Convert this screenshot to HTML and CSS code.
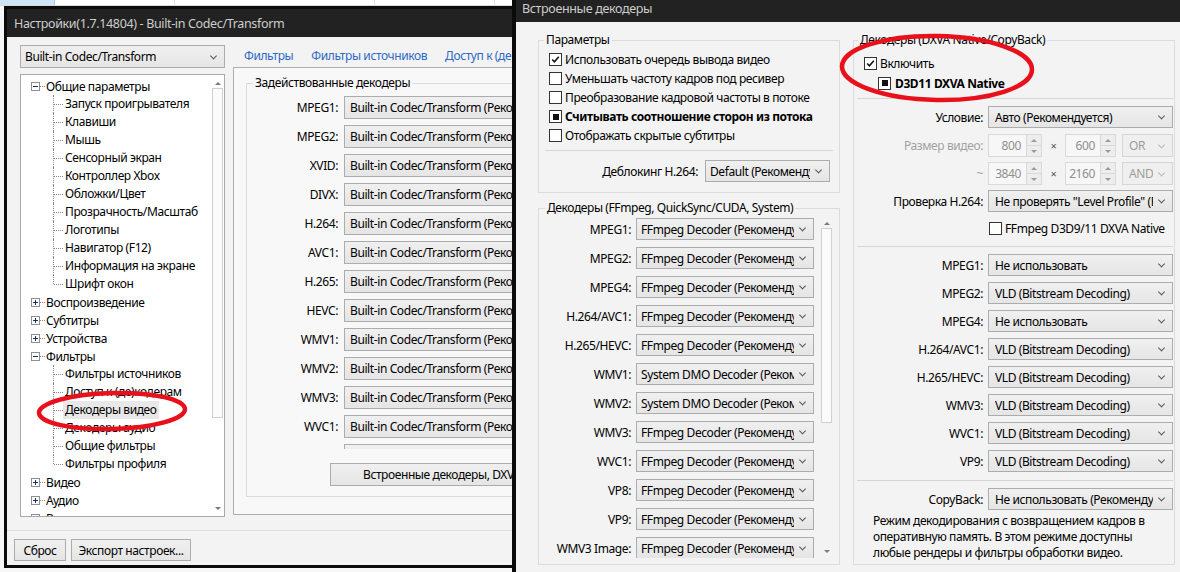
FILE: index.html
```html
<!DOCTYPE html>
<html lang="ru">
<head>
<meta charset="utf-8">
<title>Настройки</title>
<link rel="stylesheet" href="styles.css">
</head>
<body>
<div class="desktop">
  <div class="bg-app">
    <div class="bg-top">
      <span class="bg-tab"></span>
      <span class="bg-cell"></span>
      <span class="bg-cell wide"></span>
      <span class="bg-cell"></span>
    </div>
  </div>

  <section class="win win-main">
    <header class="titlebar">Настройки(1.7.14804) - Built-in Codec/Transform</header>
    <div class="main-body">
      <div class="main-top">
        <div class="nav-col">
          <div class="combo combo-nav"><span class="val">Built-in Codec/Transform</span></div>
          <div class="tree">
            <div class="tree-list">
              <div class="node"><span class="exp minus"></span><span class="dots"></span><span>Общие параметры</span></div>
              <div class="kids">
                <div class="kid"><span>Запуск проигрывателя</span></div>
                <div class="kid"><span>Клавиши</span></div>
                <div class="kid"><span>Мышь</span></div>
                <div class="kid"><span>Сенсорный экран</span></div>
                <div class="kid"><span>Контроллер Xbox</span></div>
                <div class="kid"><span>Обложки/Цвет</span></div>
                <div class="kid"><span>Прозрачность/Масштаб</span></div>
                <div class="kid"><span>Логотипы</span></div>
                <div class="kid"><span>Навигатор (F12)</span></div>
                <div class="kid"><span>Информация на экране</span></div>
                <div class="kid"><span>Шрифт окон</span></div>
              </div>
              <div class="node"><span class="exp plus"></span><span class="dots"></span><span>Воспроизведение</span></div>
              <div class="node"><span class="exp plus"></span><span class="dots"></span><span>Субтитры</span></div>
              <div class="node"><span class="exp plus"></span><span class="dots"></span><span>Устройства</span></div>
              <div class="node"><span class="exp minus"></span><span class="dots"></span><span>Фильтры</span></div>
              <div class="kids">
                <div class="kid"><span>Фильтры источников</span></div>
                <div class="kid"><span>Доступ к (де)кодерам</span></div>
                <div class="kid"><span class="sel">Декодеры видео</span></div>
                <div class="kid"><span>Декодеры аудио</span></div>
                <div class="kid"><span>Общие фильтры</span></div>
                <div class="kid"><span>Фильтры профиля</span></div>
              </div>
              <div class="node"><span class="exp plus"></span><span class="dots"></span><span>Видео</span></div>
              <div class="node"><span class="exp plus"></span><span class="dots"></span><span>Аудио</span></div>
              <div class="node"><span class="exp plus"></span><span class="dots"></span><span>Вывод</span></div>
            </div>
            <div class="vscroll vscroll-tree">
              <span class="arr up"></span>
              <span class="thumb"></span>
              <span class="track"></span>
              <span class="arr down"></span>
            </div>
          </div>
        </div>
        <div class="page-col">
          <nav class="links">
            <a>Фильтры</a>
            <a>Фильтры источников</a>
            <a>Доступ к (де)кодерам</a>
          </nav>
          <div class="pane">
            <fieldset class="group group-used">
              <legend>Задействованные декодеры</legend>
              <div class="rows-clip">
                <div class="rows rows-used">
                  <label>MPEG1:</label><div class="combo combo-tall"><span class="val">Built-in Codec/Transform (Рекомендуется)</span></div>
                  <label>MPEG2:</label><div class="combo combo-tall"><span class="val">Built-in Codec/Transform (Рекомендуется)</span></div>
                  <label>XVID:</label><div class="combo combo-tall"><span class="val">Built-in Codec/Transform (Рекомендуется)</span></div>
                  <label>DIVX:</label><div class="combo combo-tall"><span class="val">Built-in Codec/Transform (Рекомендуется)</span></div>
                  <label>H.264:</label><div class="combo combo-tall"><span class="val">Built-in Codec/Transform (Рекомендуется)</span></div>
                  <label>AVC1:</label><div class="combo combo-tall"><span class="val">Built-in Codec/Transform (Рекомендуется)</span></div>
                  <label>H.265:</label><div class="combo combo-tall"><span class="val">Built-in Codec/Transform (Рекомендуется)</span></div>
                  <label>HEVC:</label><div class="combo combo-tall"><span class="val">Built-in Codec/Transform (Рекомендуется)</span></div>
                  <label>WMV1:</label><div class="combo combo-tall"><span class="val">Built-in Codec/Transform (Рекомендуется)</span></div>
                  <label>WMV2:</label><div class="combo combo-tall"><span class="val">Built-in Codec/Transform (Рекомендуется)</span></div>
                  <label>WMV3:</label><div class="combo combo-tall"><span class="val">Built-in Codec/Transform (Рекомендуется)</span></div>
                  <label>WVC1:</label><div class="combo combo-tall"><span class="val">Built-in Codec/Transform (Рекомендуется)</span></div>
                  <label>VP8:</label><div class="combo combo-tall"><span class="val">Built-in Codec/Transform (Рекомендуется)</span></div>
                </div>
              </div>
              <div class="btn btn-dxva">Встроенные декодеры, DXVA Native/CopyBack</div>
            </fieldset>
          </div>
        </div>
      </div>
      <footer class="main-foot">
        <div class="btn btn-reset">Сброс</div>
        <div class="btn btn-export">Экспорт настроек...</div>
      </footer>
    </div>
  </section>

  <section class="win win-dec">
    <header class="titlebar">Встроенные декодеры</header>
    <div class="dec-body">
      <div class="dec-left">
        <fieldset class="group group-params">
          <legend>Параметры</legend>
          <div class="chk"><span class="box"><svg viewBox="0 0 13 13"><path d="M2.6 6.6 L5.2 9.2 L10.4 3.2" /></svg></span><span>Использовать очередь вывода видео</span></div>
          <div class="chk"><span class="box"></span><span>Уменьшать частоту кадров под ресивер</span></div>
          <div class="chk"><span class="box"></span><span>Преобразование кадровой частоты в потоке</span></div>
          <div class="chk"><span class="box ind"><i></i></span><b>Считывать соотношение сторон из потока</b></div>
          <div class="chk"><span class="box"></span><span>Отображать скрытые субтитры</span></div>
          <div class="sep sep-params"></div>
          <div class="deblock">
            <label>Деблокинг H.264:</label>
            <div class="combo combo-deblock"><span class="val">Default (Рекомендуется)</span></div>
          </div>
        </fieldset>
        <fieldset class="group group-ff">
          <legend>Декодеры (FFmpeg, QuickSync/CUDA, System)</legend>
          <div class="ff-body">
            <div class="ff-clip">
              <div class="rows rows-ff">
                <label>MPEG1:</label><div class="combo"><span class="val">FFmpeg Decoder (Рекомендуется)</span></div>
                <label>MPEG2:</label><div class="combo"><span class="val">FFmpeg Decoder (Рекомендуется)</span></div>
                <label>MPEG4:</label><div class="combo"><span class="val">FFmpeg Decoder (Рекомендуется)</span></div>
                <label>H.264/AVC1:</label><div class="combo"><span class="val">FFmpeg Decoder (Рекомендуется)</span></div>
                <label>H.265/HEVC:</label><div class="combo"><span class="val">FFmpeg Decoder (Рекомендуется)</span></div>
                <label>WMV1:</label><div class="combo"><span class="val">System DMO Decoder (Рекомендуется)</span></div>
                <label>WMV2:</label><div class="combo"><span class="val">System DMO Decoder (Рекомендуется)</span></div>
                <label>WMV3:</label><div class="combo"><span class="val">FFmpeg Decoder (Рекомендуется)</span></div>
                <label>WVC1:</label><div class="combo"><span class="val">FFmpeg Decoder (Рекомендуется)</span></div>
                <label>VP8:</label><div class="combo"><span class="val">FFmpeg Decoder (Рекомендуется)</span></div>
                <label>VP9:</label><div class="combo"><span class="val">FFmpeg Decoder (Рекомендуется)</span></div>
                <label>WMV3 Image:</label><div class="combo"><span class="val">FFmpeg Decoder (Рекомендуется)</span></div>
              </div>
            </div>
            <div class="vscroll vscroll-ff">
              <span class="arr up"></span>
              <span class="thumb"></span>
              <span class="track"></span>
              <span class="arr down"></span>
            </div>
          </div>
        </fieldset>
      </div>

      <fieldset class="group group-dxva">
        <legend>Декодеры (DXVA Native/CopyBack)</legend>
        <div class="chk chk-enable"><span class="box"><svg viewBox="0 0 13 13"><path d="M2.6 6.6 L5.2 9.2 L10.4 3.2" /></svg></span><span>Включить</span></div>
        <div class="chk chk-native"><span class="box ind"><i></i></span><b>D3D11 DXVA Native</b></div>
        <div class="sep sep-dxva1"></div>

        <div class="frow fr-cond">
          <label>Условие:</label>
          <div class="combo"><span class="val">Авто (Рекомендуется)</span></div>
        </div>
        <div class="frow fr-size">
          <label class="dim">Размер видео:</label>
          <div class="sizes">
            <div class="spin spin-a"><span class="num">800</span><span class="spin-btns"><span class="sb"><i class="tri up"></i></span><span class="sb"><i class="tri down"></i></span></span></div>
            <span class="times">×</span>
            <div class="spin spin-b"><span class="num">600</span><span class="spin-btns"><span class="sb"><i class="tri up"></i></span><span class="sb"><i class="tri down"></i></span></span></div>
            <div class="combo combo-off"><span class="val">OR</span></div>
          </div>
        </div>
        <div class="frow fr-size2">
          <label class="dim">~</label>
          <div class="sizes">
            <div class="spin spin-a"><span class="num">3840</span><span class="spin-btns"><span class="sb"><i class="tri up"></i></span><span class="sb"><i class="tri down"></i></span></span></div>
            <span class="times">×</span>
            <div class="spin spin-b"><span class="num">2160</span><span class="spin-btns"><span class="sb"><i class="tri up"></i></span><span class="sb"><i class="tri down"></i></span></span></div>
            <div class="combo combo-off"><span class="val">AND</span></div>
          </div>
        </div>
        <div class="frow fr-check">
          <label>Проверка H.264:</label>
          <div class="combo"><span class="val">Не проверять "Level Profile" (Рекомендуется)</span></div>
        </div>
        <div class="chk chk-ffd3d"><span class="box"></span><span>FFmpeg D3D9/11 DXVA Native</span></div>
        <div class="sep sep-dxva2"></div>

        <div class="codec-list">
          <div class="frow"><label>MPEG1:</label><div class="combo"><span class="val">Не использовать</span></div></div>
          <div class="frow"><label>MPEG2:</label><div class="combo"><span class="val">VLD (Bitstream Decoding)</span></div></div>
          <div class="frow"><label>MPEG4:</label><div class="combo"><span class="val">Не использовать</span></div></div>
          <div class="frow"><label>H.264/AVC1:</label><div class="combo"><span class="val">VLD (Bitstream Decoding)</span></div></div>
          <div class="frow"><label>H.265/HEVC:</label><div class="combo"><span class="val">VLD (Bitstream Decoding)</span></div></div>
          <div class="frow"><label>WMV3:</label><div class="combo"><span class="val">VLD (Bitstream Decoding)</span></div></div>
          <div class="frow"><label>WVC1:</label><div class="combo"><span class="val">VLD (Bitstream Decoding)</span></div></div>
          <div class="frow"><label>VP9:</label><div class="combo"><span class="val">VLD (Bitstream Decoding)</span></div></div>
        </div>
        <div class="sep sep-dxva3"></div>
        <div class="frow fr-copy">
          <label>CopyBack:</label>
          <div class="combo"><span class="val">Не использовать (Рекомендуется)</span></div>
        </div>
        <p class="desc">Режим декодирования с возвращением кадров в<br>оперативную память. В этом режиме доступны<br>любые рендеры и фильтры обработки видео.</p>
      </fieldset>
    </div>
  </section>

  <svg class="marks" viewBox="0 0 1180 572" width="1180" height="572">
    <ellipse cx="112" cy="411" rx="73" ry="18" transform="rotate(-1.5 112 411)" />
    <ellipse cx="937" cy="68" rx="95" ry="32" transform="rotate(1 937 68)" />
  </svg>
</div>
</body>
</html>
```

FILE: styles.css
```css
* { box-sizing: border-box; }
html, body { margin: 0; padding: 0; }
body {
  font-family: "Noto Sans", "Segoe UI", sans-serif;
  font-size: 12px;
  letter-spacing: -0.4px;
  color: #000;
  background: #ececec;
}

.desktop {
  position: relative;
  width: 1180px;
  height: 572px;
  overflow: hidden;
  background: #e4e4e4;
}

/* background application peeking out */
.bg-app {
  position: absolute;
  left: 0;
  top: 0;
  width: 520px;
  height: 572px;
  background: #f7f7f7;
}
.bg-top {
  display: flex;
  height: 6px;
  background: #fff;
  border-bottom: 1px solid #d8d8d8;
}
.bg-tab { width: 55px; background: #cfe5f6; border-right: 1px solid #9cc6e8; }
.bg-cell { width: 120px; border-right: 1px solid #e2e2e2; }
.bg-cell.wide { width: 200px; }

/* windows */
.win {
  position: absolute;
  display: flex;
  flex-direction: column;
  background: #f0f0f0;
  border: 3px solid #0b0b0b;
  overflow: hidden;
}
.titlebar {
  flex: 0 0 auto;
  display: flex;
  align-items: center;
  background: #222;
  color: #cdcdcd;
  font-size: 12.5px;
  letter-spacing: -0.35px;
  white-space: nowrap;
}

.win-main {
  left: 4px;
  top: 6px;
  width: 511px;
  height: 562px;
}
.win-main .titlebar { height: 28px; padding-left: 7px; }

.main-body {
  flex: 1;
  display: flex;
  flex-direction: column;
  background: #f3f3f3;
}
.main-top {
  display: grid;
  grid-template-columns: 205px 320px;
  column-gap: 8px;
  padding: 8px 0 13px 13px;
}
.nav-col { display: flex; flex-direction: column; gap: 6px; }

/* combo boxes */
.combo {
  position: relative;
  display: flex;
  align-items: center;
  height: 22px;
  padding: 0 19px 0 4px;
  border: 1px solid #acacac;
  background: linear-gradient(#f0f0f0, #e5e5e5);
  white-space: nowrap;
  overflow: hidden;
}
.combo .val { flex: 1; overflow: hidden; }
.combo::after {
  content: "";
  position: absolute;
  right: 8px;
  top: 50%;
  width: 4px;
  height: 4px;
  border-right: 1.6px solid #555;
  border-bottom: 1.6px solid #555;
  transform: translateY(-70%) rotate(45deg);
}
.combo-nav { height: 23px; }
.combo-tall { height: 23px; width: 220px; padding-left: 5px; }
.combo-off {
  background: #efefef;
  border-color: #d5d5d5;
  color: #9c9c9c;
  padding-left: 7px;
}
.combo-off::after { border-color: #b8b8b8; }

/* tree */
.tree {
  display: flex;
  height: 443px;
  border: 1px solid #a9a9a9;
  background: #fff;
  overflow: hidden;
}
.tree-list {
  flex: 1;
  padding-top: 2px;
  overflow: hidden;
}
.node {
  display: flex;
  align-items: center;
  height: 18px;
  padding-left: 10px;
  white-space: nowrap;
}
.exp {
  position: relative;
  flex: 0 0 9px;
  width: 9px;
  height: 9px;
  border: 1px solid #8e8f8f;
  background: #fff;
}
.exp::before {
  content: "";
  position: absolute;
  left: 1px;
  top: 3px;
  width: 5px;
  height: 1px;
  background: #1d2f6b;
}
.exp.plus::after {
  content: "";
  position: absolute;
  left: 3px;
  top: 1px;
  width: 1px;
  height: 5px;
  background: #1d2f6b;
}
.dots {
  width: 5px;
  margin-right: 1px;
  border-top: 1px dotted #8a8a8a;
}
.kid {
  position: relative;
  height: 18px;
  line-height: 18px;
  padding-left: 44px;
  white-space: nowrap;
}
.kid::before {
  content: "";
  position: absolute;
  left: 32px;
  top: 0;
  height: 100%;
  border-left: 1px dotted #8a8a8a;
}
.kid:last-child::before { height: 9px; }
.kid::after {
  content: "";
  position: absolute;
  left: 33px;
  top: 9px;
  width: 9px;
  border-top: 1px dotted #8a8a8a;
}
.kid .sel {
  display: inline-block;
  margin-left: -2px;
  padding: 0 2px;
  background: #e8e8e8;
}

/* scroll bars */
.vscroll {
  display: flex;
  flex-direction: column;
  align-items: center;
}
.vscroll-tree { flex: 0 0 13px; width: 13px; padding: 3px 0 3px; }
.vscroll .arr {
  flex: 0 0 10px;
  display: flex;
  align-items: center;
  justify-content: center;
}
.vscroll .arr::before {
  content: "";
  width: 0;
  height: 0;
  border-left: 3px solid transparent;
  border-right: 3px solid transparent;
}
.vscroll .arr.up::before { border-bottom: 3px solid #7a7a7a; }
.vscroll .arr.down::before { border-top: 3px solid #7a7a7a; }
.vscroll .thumb {
  width: 11px;
  border: 1px solid #d0d0d0;
  background: #fbfbfb;
}
.vscroll-tree .thumb { height: 330px; }
.vscroll .track { flex: 1; }

/* right column of main window */
.page-col { display: flex; flex-direction: column; }
.links {
  display: flex;
  gap: 18px;
  height: 22px;
  align-items: center;
  padding-left: 11px;
  padding-bottom: 1px;
  white-space: nowrap;
}
.links a { color: #2d69c6; }
.pane {
  height: 448px;
  border: 1px solid #adadad;
  background: #f8f8f8;
  padding: 7px 0 0 12px;
}

.group {
  margin: 0;
  padding: 0;
  border: 1px solid #dcdcdc;
  min-width: 0;
}
.group legend {
  margin-left: 5px;
  padding: 0 2px;
  line-height: 16px;
}
.group-used {
  width: 320px;
  padding: 3px 0 10px 0;
}
.group-used legend { margin-left: 6px; }
.rows-clip {
  height: 355px;
  overflow: hidden;
  padding-top: 2px;
}
.rows {
  display: grid;
  align-items: center;
}
.rows label { text-align: right; white-space: nowrap; }
.rows-used {
  grid-template-columns: 91px 220px;
  column-gap: 6px;
  row-gap: 6px;
}
.btn {
  display: flex;
  align-items: center;
  justify-content: center;
  height: 22px;
  border: 1px solid #acacac;
  background: linear-gradient(#f0f0f0, #e5e5e5);
  white-space: nowrap;
}
.btn-dxva {
  width: 240px;
  height: 23px;
  margin: 14px 0 0 83px;
  justify-content: flex-start;
  padding-left: 32px;
  overflow: hidden;
}

.main-foot {
  display: flex;
  gap: 5px;
  padding: 8px 0 0 7px;
  border-top: 1px solid #dedede;
}
.btn-reset { width: 52px; }
.btn-export { width: 120px; }

/* second window */
.win-dec {
  left: 512px;
  top: -8px;
  width: 700px;
  height: 600px;
  border-width: 4px;
}
.win-dec .titlebar { height: 26px; padding: 0 0 2px 6px; }
.dec-body {
  flex: 1;
  display: grid;
  grid-template-columns: 302px 322px;
  column-gap: 13px;
  align-items: start;
  padding: 10px 0 0 22px;
  background: #f3f3f3;
}
.dec-left { display: flex; flex-direction: column; gap: 7px; }

.chk {
  display: flex;
  align-items: center;
  height: 19px;
  padding-left: 10px;
  white-space: nowrap;
}
.box {
  flex: 0 0 13px;
  width: 13px;
  height: 13px;
  margin-right: 3px;
  border: 1px solid #333;
  background: #fff;
  display: flex;
  align-items: center;
  justify-content: center;
}
.box svg { width: 13px; height: 13px; fill: none; stroke: #111; stroke-width: 1.8; }
.box.ind i { width: 6px; height: 6px; background: #111; }

.group-params { padding: 2px 0 10px 0; }
.sep {
  border-top: 1px solid #d6d6d6;
}
.sep-params { margin: 5px 6px 0 6px; }
.deblock {
  display: flex;
  align-items: center;
  justify-content: flex-end;
  gap: 7px;
  margin-top: 9px;
  padding-right: 9px;
}
.combo-deblock { width: 125px; }

.group-ff { padding: 0 0 6px 0; }
.group-ff legend { margin-left: 6px; }
.ff-body { display: flex; height: 342px; }
.ff-clip { flex: 0 0 275px; overflow: hidden; padding-top: 2px; }
.rows-ff {
  grid-template-columns: 92px 178px;
  column-gap: 5px;
  row-gap: 7px;
}
.vscroll-ff { flex: 0 0 11px; width: 11px; margin-left: 7px; padding: 2px 0 2px; }
.vscroll-ff .arr { flex-basis: 10px; }
.vscroll-ff .thumb { width: 11px; height: 195px; }

/* DXVA group */
.group-dxva { padding: 5px 0 3px 0; }
.group-dxva legend { margin-left: 4px; }
.chk-enable { height: 20px; }
.chk-native { height: 20px; padding-left: 24px; }
.chk-native .box { margin-right: 4px; }
.sep-dxva1 { margin: 5px 1px 0 3px; }

.frow {
  display: flex;
  align-items: center;
  gap: 5px;
}
.frow > label {
  flex: 0 0 129px;
  text-align: right;
  white-space: nowrap;
}
.frow > .combo, .frow > .sizes { flex: 0 0 185px; width: 185px; }
.frow .combo { height: 22px; padding-left: 6px; }
.dim { color: #a2a2a2; }

.fr-cond { margin-top: 7px; }
.fr-size { margin-top: 6px; }
.fr-size2 { margin-top: 5px; }
.fr-check { margin-top: 5px; }
.sizes {
  display: flex;
  align-items: center;
  height: 23px;
}
.spin {
  display: flex;
  height: 23px;
  border: 1px solid #d9d9d9;
  background: #f7f7f7;
  color: #8f8f8f;
}
.spin-a { width: 54px; }
.spin-b { width: 51px; }
.spin .num {
  flex: 1;
  display: flex;
  align-items: center;
  justify-content: flex-end;
  padding-right: 5px;
}
.spin-btns {
  flex: 0 0 15px;
  display: flex;
  flex-direction: column;
  border-left: 1px solid #d9d9d9;
}
.sb {
  flex: 1;
  display: flex;
  align-items: center;
  justify-content: center;
  background: #ededed;
}
.sb + .sb { border-top: 1px solid #d9d9d9; }
.tri {
  width: 0;
  height: 0;
  border-left: 3px solid transparent;
  border-right: 3px solid transparent;
}
.tri.up { border-bottom: 3px solid #9a9a9a; }
.tri.down { border-top: 3px solid #9a9a9a; }
.times {
  width: 23px;
  text-align: center;
  color: #555;
  font-size: 11px;
}
.sizes .combo-off { width: 51px; height: 23px; margin-left: 6px; }

.chk-ffd3d { height: 14px; margin-top: 9px; padding-left: 135px; }
.sep-dxva2 { margin: 11px 1px 0 3px; }
.codec-list {
  display: flex;
  flex-direction: column;
  gap: 6px;
  margin-top: 7px;
}
.sep-dxva3 { margin: 8px 1px 0 3px; }
.fr-copy { margin-top: 7px; }
.desc {
  margin: 3px 0 0 0;
  padding-left: 19px;
  line-height: 16px;
  white-space: nowrap;
}

/* red hand-drawn annotations */
.marks {
  position: absolute;
  left: 0;
  top: 0;
  pointer-events: none;
}
.marks ellipse {
  fill: none;
  stroke: #e8101b;
  stroke-width: 4.5;
}
```
